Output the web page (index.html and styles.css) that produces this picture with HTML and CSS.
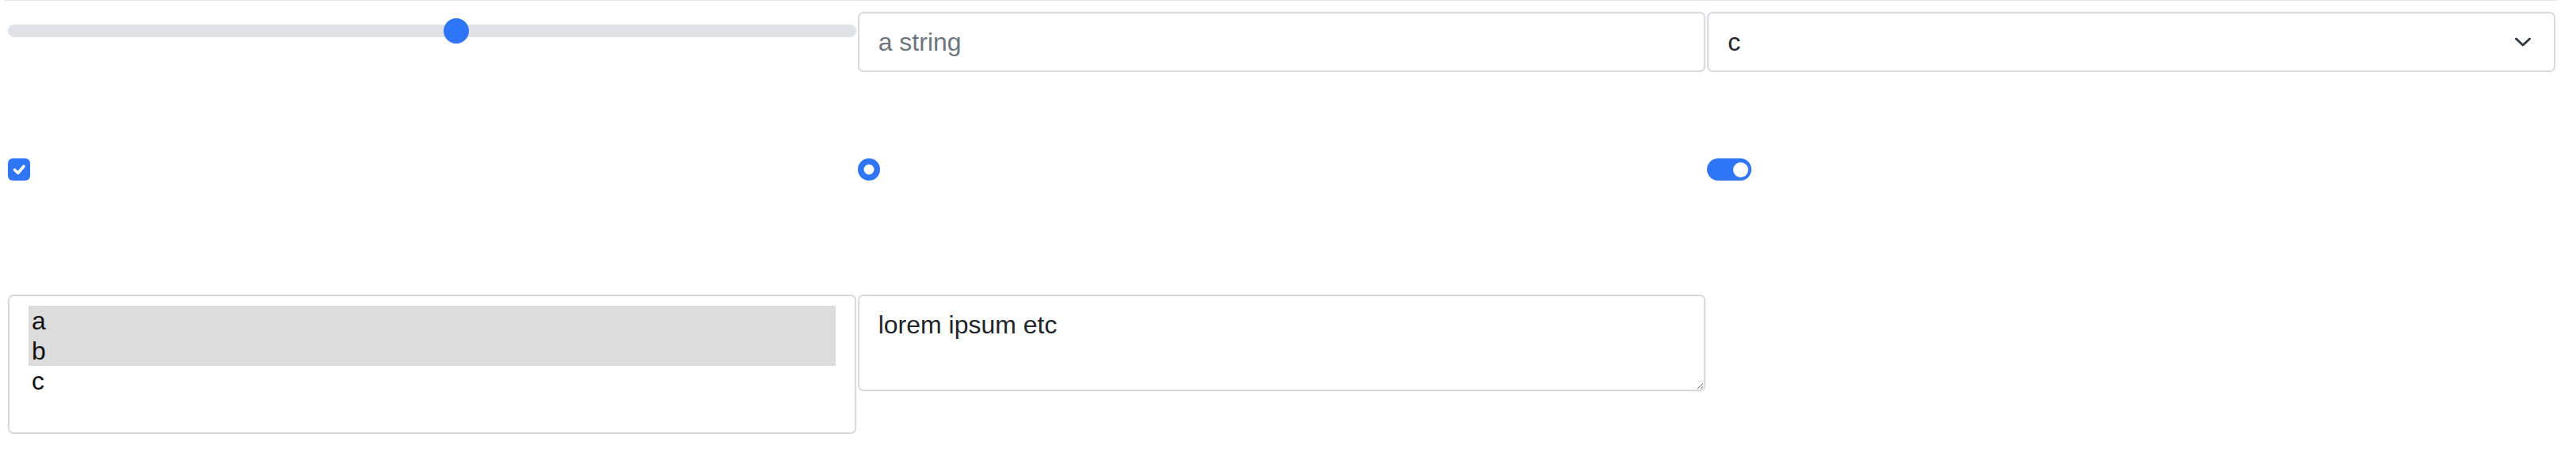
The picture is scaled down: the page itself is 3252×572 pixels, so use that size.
FILE: index.html
```html
<!DOCTYPE html>
<html lang="en">
<head>
<meta charset="utf-8">
<title>Form controls</title>
<link rel="stylesheet" href="styles.css">
</head>
<body>
<div class="page">
  <div class="grid">
    <div class="cell">
      <input class="range" type="range" min="0" max="100" value="53" aria-label="range">
    </div>
    <div class="cell">
      <input class="control" type="text" placeholder="a string" aria-label="text">
    </div>
    <div class="cell">
      <div class="select-wrap">
        <select class="control select" aria-label="select">
          <option>a</option>
          <option>b</option>
          <option selected>c</option>
        </select>
        <svg class="chev" width="22" height="12" viewBox="0 0 22 12" aria-hidden="true"><path d="M2.5 2 L11 10 L19.5 2" fill="none" stroke="#343a40" stroke-width="3" stroke-linecap="round" stroke-linejoin="round"/></svg>
      </div>
    </div>

    <div class="cell">
      <svg class="check" width="28" height="28" viewBox="0 0 28 28" aria-label="checkbox checked"><rect width="28" height="28" rx="6" fill="#2f76f6"/><polyline points="8.5,14.5 12.8,18.5 20,10" fill="none" stroke="#fff" stroke-width="3.6" stroke-linecap="round" stroke-linejoin="round"/></svg>
    </div>
    <div class="cell">
      <svg class="radio" width="28" height="28" viewBox="0 0 28 28" aria-label="radio checked"><circle cx="14" cy="14" r="14" fill="#2f76f6"/><circle cx="14" cy="14" r="6.5" fill="#fff"/></svg>
    </div>
    <div class="cell">
      <span class="switch" role="switch" aria-checked="true"><span class="knob"></span></span>
    </div>

    <div class="cell">
      <div class="listbox" role="listbox" aria-multiselectable="true">
        <div class="opt sel">a</div>
        <div class="opt sel">b</div>
        <div class="opt">c</div>
      </div>
    </div>
    <div class="cell">
      <textarea class="control area" rows="2" aria-label="textarea">lorem ipsum etc</textarea>
    </div>
    <div class="cell"></div>
  </div>
</div>
</body>
</html>
```

FILE: styles.css
```css
html, body {
  margin: 0;
  padding: 0;
  background: #fff;
}

body {
  font-family: "Liberation Sans", Arial, Helvetica, sans-serif;
  font-size: 32px;
  color: #212529;
}

.page {
  margin-left: 6px;
  width: 3222px;
  border-top: 1px solid #e3e6e9;
}

.grid {
  margin-left: 4px;
  width: 3216px;
  padding-top: 14px;
  display: grid;
  grid-template-columns: repeat(3, 1fr);
  grid-template-rows: 185px 172px auto;
  column-gap: 2px;
}

.cell {
  min-width: 0;
  align-self: start;
}

/* range */
.range {
  -webkit-appearance: none;
  appearance: none;
  display: block;
  width: 100%;
  height: 48px;
  margin: 0;
  padding: 0;
  background: transparent;
}
.range::-webkit-slider-runnable-track {
  height: 16px;
  border-radius: 8px;
  background: #dfe2e6;
  border: 0;
}
.range::-webkit-slider-thumb {
  -webkit-appearance: none;
  appearance: none;
  width: 32px;
  height: 32px;
  margin-top: -8px;
  border: 0;
  border-radius: 50%;
  background: #2f76f6;
}

/* text controls */
.control {
  display: block;
  box-sizing: border-box;
  width: 100%;
  margin: 0;
  padding: 12px 24px;
  font: inherit;
  font-size: 32px;
  line-height: 1.5;
  color: #212529;
  background: #fff;
  border: 2px solid #d6dadf;
  border-radius: 7px;
  outline: none;
}
.control::placeholder {
  color: #6c757d;
  opacity: 1;
}

.select-wrap {
  position: relative;
}
.select {
  -webkit-appearance: none;
  appearance: none;
  padding-right: 72px;
}
.chev {
  position: absolute;
  right: 30px;
  top: 32px;
  pointer-events: none;
}

/* checkbox / radio / switch */
.check, .radio {
  display: block;
  margin-top: 0;
}
.cell:nth-child(5) .radio {
  margin-left: 0;
}
.switch {
  display: flex;
  justify-content: flex-end;
  align-items: center;
  box-sizing: border-box;
  width: 56px;
  height: 28px;
  padding-right: 4px;
  border-radius: 14px;
  background: #2f76f6;
}
.knob {
  width: 19px;
  height: 19px;
  border-radius: 50%;
  background: #fff;
}

/* listbox */
.listbox {
  box-sizing: border-box;
  height: 176px;
  padding: 12px 24px;
  border: 2px solid #d6dadf;
  border-radius: 7px;
  background: #fff;
}
.opt {
  height: 38px;
  line-height: 38px;
  padding-left: 4px;
  color: #111;
}
.opt.sel {
  background: #dcdcdc;
}

/* textarea */
.area {
  height: 122px;
  resize: vertical;
}
```
